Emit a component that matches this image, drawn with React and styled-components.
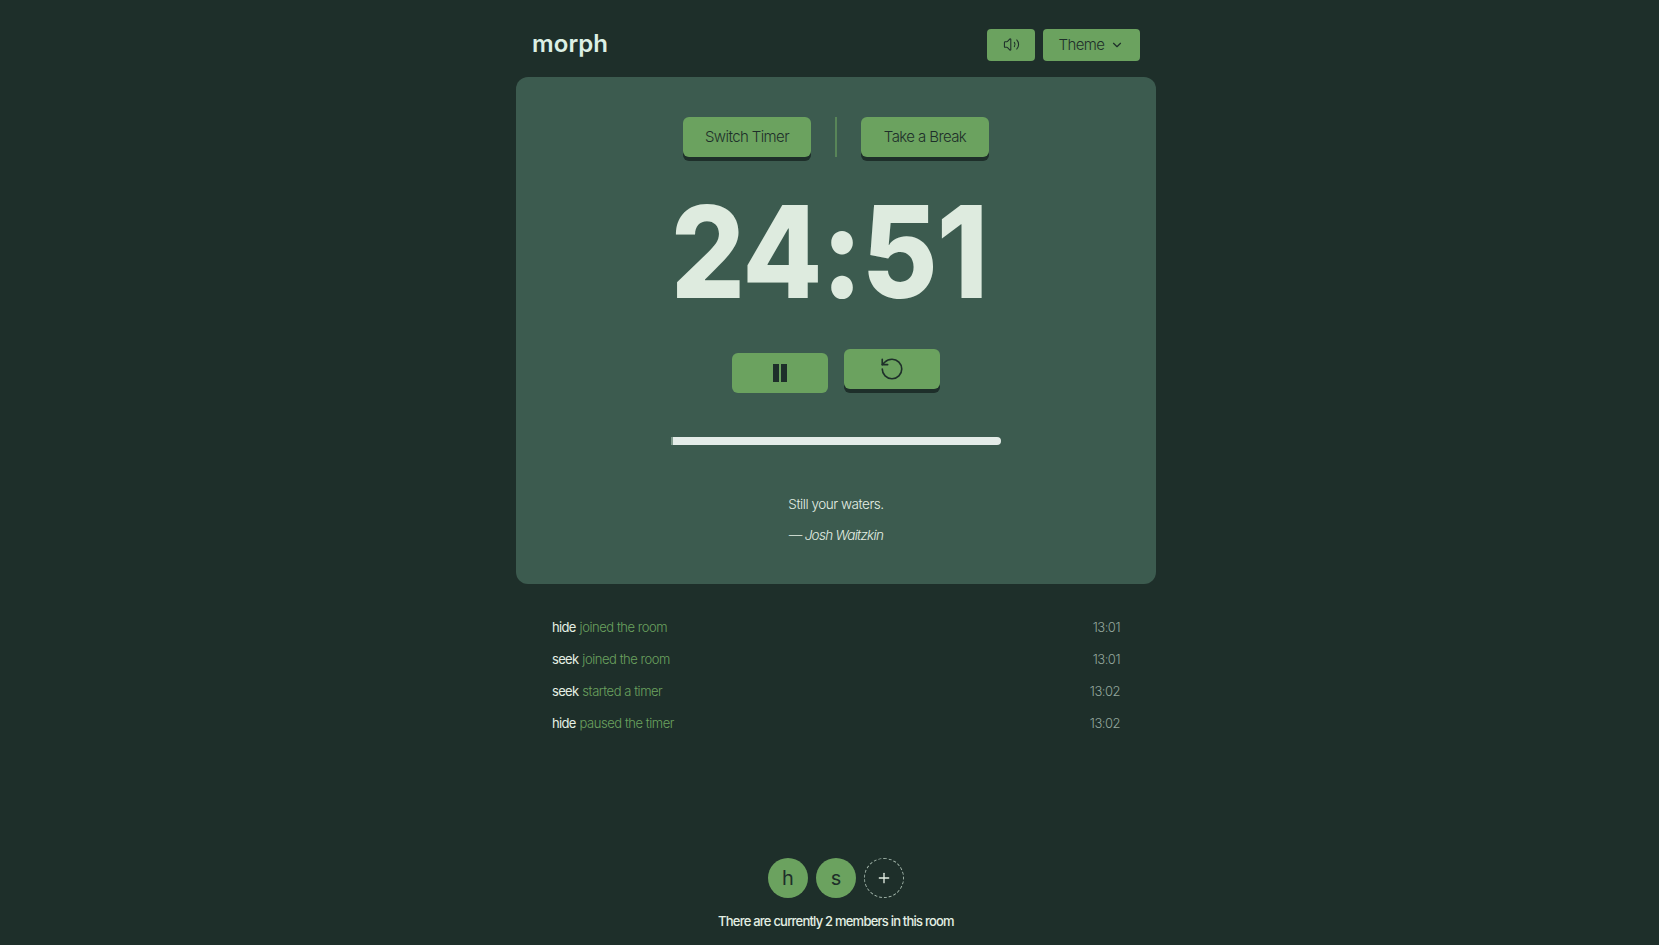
import React from "react";
import styled, { createGlobalStyle } from "styled-components";
import { Volume2, ChevronDown, RotateCcw, Plus } from "lucide-react";

const GlobalStyle = createGlobalStyle`
  html, body { margin: 0; padding: 0; background: #1e2f2a; }
  body { padding-left: 13px; font-family: "Inter", "Noto Sans", sans-serif; color: #e4efe4; }
  * { box-sizing: border-box; }
`;

const Page = styled.div`
  width: 640px;
  height: 945px;
  margin: 0 auto;
  display: flex;
  flex-direction: column;
  overflow: hidden;
`;

const Header = styled.header`
  display: flex;
  align-items: center;
  justify-content: space-between;
  height: 77px;
  padding: 13px 16px 0 16px;
`;

const Logo = styled.div`
  font-size: 24px;
  font-weight: 600;
  letter-spacing: 0.1px;
  color: #dcefe4;
  line-height: 32px;
  margin-bottom: 2px;
`;

const HeaderActions = styled.div`
  display: flex;
  gap: 8px;
`;

const Button = styled.button`
  display: flex;
  align-items: center;
  justify-content: center;
  border: none;
  background: #6ba25f;
  color: #1e2f2a;
  font-family: "Inter", sans-serif;
  font-weight: 300;
  letter-spacing: -0.6px;
  padding: 0 0 1px;
  cursor: pointer;
`;

const HeaderButton = styled(Button)`
  height: 32px;
  width: ${(p) => p.$width}px;
  border-radius: 4px;
  font-size: 15px;
  gap: 6px;
`;

const RaisedButton = styled(Button)`
  height: 40px;
  width: ${(p) => p.$width}px;
  border-radius: 6px;
  font-size: 15px;
  box-shadow: ${(p) => (p.$pressed ? "none" : "0 4px 0 #1e2f2a")};
  transform: translateY(${(p) => (p.$pressed ? "4px" : "0")});
`;

const Card = styled.main`
  height: 507px;
  background: #3c5b4f;
  border-radius: 12px;
  display: flex;
  flex-direction: column;
  align-items: center;
  padding-top: 40px;
`;

const ModeRow = styled.div`
  display: flex;
  align-items: center;
  gap: 24px;
`;

const Divider = styled.div`
  width: 2px;
  height: 40px;
  background: #6ba25f;
  opacity: 0.6;
`;

const Time = styled.div`
  font-size: 128px;
  font-weight: 800;
  line-height: 1;
  letter-spacing: -1px;
  color: #deebdf;
  margin: 31px 14px 0 0;
  height: 128px;
  transform: scaleX(0.91);
`;

const Controls = styled.div`
  display: flex;
  gap: 16px;
  margin-top: 33px;
`;

const PauseIcon = styled.svg`
  width: 24px;
  height: 24px;
  fill: #1e2f2a;
`;

const Track = styled.div`
  width: 330px;
  height: 8px;
  margin-top: 48px;
  background: #e4ece8;
  border-radius: 0 4px 4px 0;
  border-left: 2px solid #7f9a8c;
`;

const Quote = styled.p`
  margin: 49px 0 0;
  font-size: 13.5px;
  font-weight: 300;
  line-height: 20px;
  letter-spacing: -0.45px;
  color: #e4efe4;
`;

const Author = styled.p`
  margin: 11px 0 0;
  font-size: 13.5px;
  font-weight: 300;
  font-style: italic;
  line-height: 20px;
  letter-spacing: -0.7px;
  color: #e4efe4;
`;

const Log = styled.ul`
  list-style: none;
  margin: 27px 0 0;
  padding: 0 36px;
`;

const LogRow = styled.li`
  display: flex;
  justify-content: space-between;
  align-items: center;
  height: 32px;
  font-size: 13px;
`;

const Who = styled.span`
  color: #e4efe4;
  font-weight: 400;
  letter-spacing: -0.7px;
  margin-right: 4px;
`;

const Action = styled.span`
  color: #6ba25f;
  font-weight: 300;
  letter-spacing: -0.45px;
`;

const Stamp = styled.span`
  color: #93a69c;
  font-weight: 300;
  letter-spacing: -0.5px;
`;

const Members = styled.section`
  margin-top: auto;
  padding-bottom: 14px;
  display: flex;
  flex-direction: column;
  align-items: center;
  gap: 13px;
`;

const Avatars = styled.div`
  display: flex;
  gap: 8px;
`;

const Avatar = styled.div`
  width: 40px;
  height: 40px;
  border-radius: 50%;
  background: #6ba25f;
  color: #1e2f2a;
  display: flex;
  align-items: center;
  justify-content: center;
  font-size: 20px;
  font-weight: 400;
`;

const AddAvatar = styled(Avatar)`
  background: transparent;
  border: 1px dashed #9fb2a7;
  color: #e4efe4;
`;

const MembersText = styled.div`
  font-size: 13px;
  font-weight: 500;
  line-height: 20px;
  letter-spacing: -0.78px;
  color: #e4efe4;
`;

const events = [
  ["hide", "joined the room", "13:01"],
  ["seek", "joined the room", "13:01"],
  ["seek", "started a timer", "13:02"],
  ["hide", "paused the timer", "13:02"],
];

export default function App() {
  return (
    <>
      <GlobalStyle />
      <Page>
        <Header>
          <Logo>morph</Logo>
          <HeaderActions>
            <HeaderButton $width={48} aria-label="Sound"><Volume2 size={17} strokeWidth={1.5} /></HeaderButton>
            <HeaderButton $width={97}>Theme<ChevronDown size={14} /></HeaderButton>
          </HeaderActions>
        </Header>
        <Card>
          <ModeRow>
            <RaisedButton $width={128}>Switch Timer</RaisedButton>
            <Divider />
            <RaisedButton $width={128}>Take a Break</RaisedButton>
          </ModeRow>
          <Time>24:51</Time>
          <Controls>
            <RaisedButton $width={96} $pressed aria-label="Pause">
              <PauseIcon viewBox="0 0 24 24">
                <rect x="5" y="3" width="6" height="18" />
                <rect x="13" y="3" width="6" height="18" />
              </PauseIcon>
            </RaisedButton>
            <RaisedButton $width={96} aria-label="Reset"><RotateCcw size={26} strokeWidth={1.5} /></RaisedButton>
          </Controls>
          <Track />
          <Quote>Still your waters.</Quote>
          <Author>— Josh Waitzkin</Author>
        </Card>
        <Log>
          {events.map(([who, action, time], i) => (
            <LogRow key={i}>
              <span><Who>{who}</Who><Action>{action}</Action></span>
              <Stamp>{time}</Stamp>
            </LogRow>
          ))}
        </Log>
        <Members>
          <Avatars>
            <Avatar>h</Avatar>
            <Avatar>s</Avatar>
            <AddAvatar aria-label="Invite"><Plus size={16} /></AddAvatar>
          </Avatars>
          <MembersText>There are currently 2 members in this room</MembersText>
        </Members>
      </Page>
    </>
  );
}
